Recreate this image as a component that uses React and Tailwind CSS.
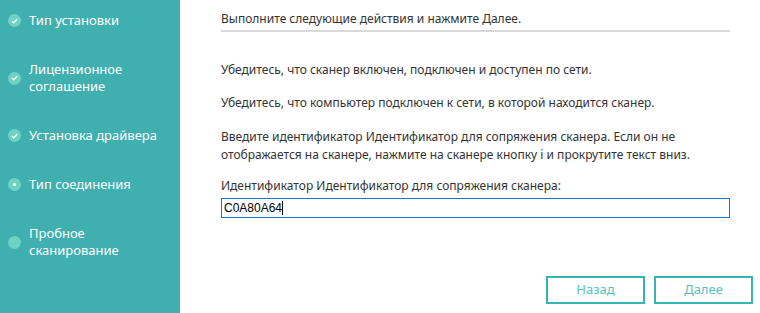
const steps = [
  { label: ['Тип установки'], state: 'done' },
  { label: ['Лицензионное', 'соглашение'], state: 'done' },
  { label: ['Установка драйвера'], state: 'done' },
  { label: ['Тип соединения'], state: 'current' },
  { label: ['Пробное', 'сканирование'], state: 'todo' },
];

const StepIcon = ({ state }) => (
  <div className="w-[13px] h-[13px] rounded-full bg-[#6fd3c3] flex items-center justify-center shrink-0">
    {state === 'done' && (
      <svg width="7" height="6" viewBox="0 0 7 6">
        <path d="M1 3.2 L2.8 4.8 L6 1.2" stroke="#fff" strokeWidth="1.3" fill="none" />
      </svg>
    )}
    {state === 'current' && <div className="w-[3px] h-[3px] rounded-full bg-white" />}
  </div>
);

const App = () => {
  return (
    <div className="w-[760px] h-[313px] flex bg-white font-['Noto_Sans',sans-serif] overflow-hidden">
      {/* Sidebar */}
      <div className="w-[180px] bg-[#3fafb0] flex flex-col gap-8 pt-[12px] pl-[8px]">
        {steps.map((s, i) => (
          <div key={i} className="flex items-center gap-[8px]">
            <StepIcon state={s.state} />
            <div className="text-white text-[13px] leading-[17px]">
              {s.label.map(l => <p key={l}>{l}</p>)}
            </div>
          </div>
        ))}
      </div>

      {/* Main */}
      <div className="flex-1 flex flex-col">
        <div className="pl-[41px] pr-[30px] text-[12px] leading-[18px] text-[#333]">
          <div className="pt-[10px] pb-[2px] border-b-2 border-[#d9d9d9]">
            Выполните следующие действия и нажмите Далее.
          </div>
          <p className="mt-[29px]">Убедитесь, что сканер включен, подключен и доступен по сети.</p>
          <p className="mt-[15px]">Убедитесь, что компьютер подключен к сети, в которой находится сканер.</p>
          <p className="mt-[16px]">
            Введите идентификатор Идентификатор для сопряжения сканера. Если он не
            <br />
            отображается на сканере, нажмите на сканере кнопку i и прокрутите текст вниз.
          </p>
          <p className="mt-[13px]">Идентификатор Идентификатор для сопряжения сканера:</p>
          <div className="mt-[3px] h-[20px] border border-[#1a73c8] flex items-center pl-[2px] font-['Liberation_Sans',sans-serif] text-[12px] text-black">
            C0A80A64<span className="w-px h-[14px] bg-black" />
          </div>
        </div>

        <div className="mt-auto flex justify-end gap-[9px] pr-[7px] pb-[9px]">
          <button className="w-[99px] h-[28px] border-2 border-[#35b6b6] text-[#58bfc0] text-[13px]">Назад</button>
          <button className="w-[99px] h-[28px] border-2 border-[#35b6b6] text-[#58bfc0] text-[13px]">Далее</button>
        </div>
      </div>
    </div>
  );
};

export default App;
